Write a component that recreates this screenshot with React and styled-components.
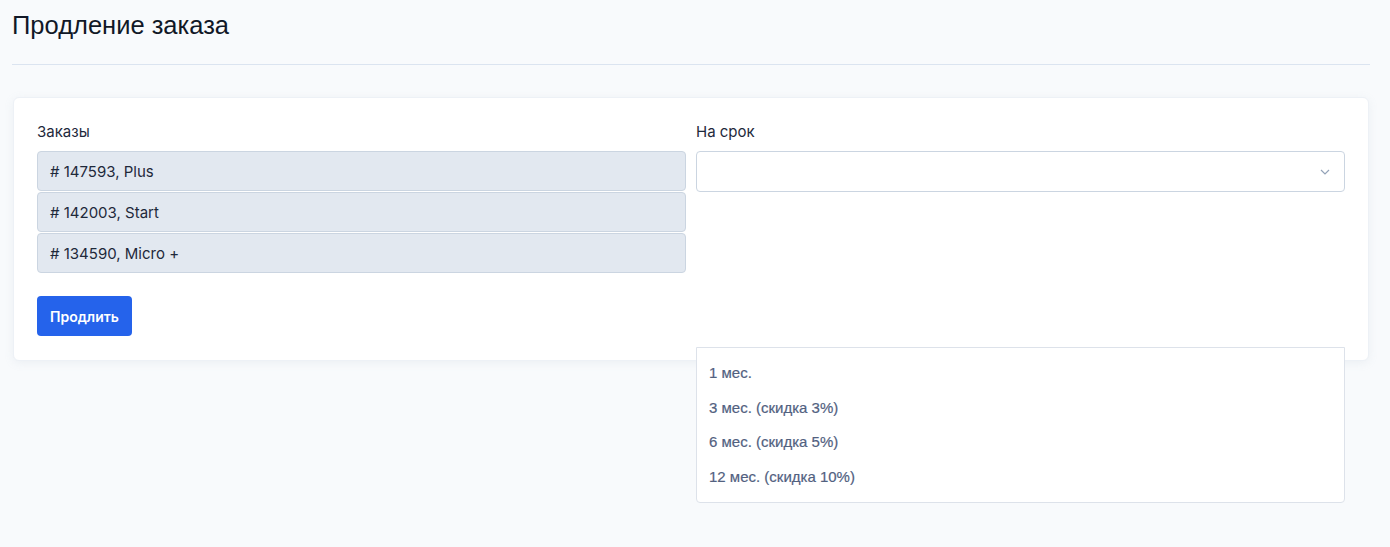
import React from 'react'
import styled, { createGlobalStyle } from 'styled-components'

const GlobalStyle = createGlobalStyle`
  body {
    margin: 0;
    background: #f8fafc;
    font-family: Inter, "Noto Sans", sans-serif;
    color: #1e293b;
  }
`

const Page = styled.div`
  padding: 12px 20px 0 12px;
  min-height: 547px;
  box-sizing: border-box;
`

const Title = styled.h1`
  margin: 0;
  height: 52px;
  font-family: "Liberation Sans", Arial, sans-serif;
  font-size: 25.5px;
  font-weight: 400;
  line-height: 27px;
  color: #111827;
`

const Divider = styled.hr`
  margin: 0 0 32px;
  border: 0;
  border-top: 1px solid #dbe4f0;
`

const Card = styled.div`
  margin: 0 1px;
  padding: 24px 23px;
  background: #fff;
  border: 1px solid #edf1f6;
  border-radius: 6px;
  box-shadow: 0 2px 10px rgba(148, 163, 184, 0.12);
`

const Columns = styled.div`
  display: grid;
  grid-template-columns: 1fr 1fr;
  column-gap: 10px;
`

const Column = styled.div`
  position: relative;
  display: flex;
  flex-direction: column;
`

const Label = styled.div`
  font-size: 15px;
  line-height: 20px;
  margin-bottom: 9px;
  color: #1e293b;
`

const OrderItem = styled.div`
  height: 40px;
  box-sizing: border-box;
  display: flex;
  align-items: center;
  padding: 0 12px;
  margin-bottom: 1px;
  background: #e2e8f0;
  border: 1px solid #cbd5e1;
  border-radius: 4px;
  font-size: 15px;
  color: #1e293b;
`

const Select = styled.div`
  height: 41px;
  box-sizing: border-box;
  display: flex;
  align-items: center;
  justify-content: flex-end;
  padding: 0 14px;
  border: 1px solid #cbd5e1;
  border-radius: 4px;
  background: #fff;
  color: #94a3b8;
`

const Dropdown = styled.ul`
  position: absolute;
  top: 225px;
  left: 0;
  right: 0;
  margin: 0;
  padding: 8px 0 8px;
  list-style: none;
  background: #fff;
  border: 1px solid #dde2ea;
  border-radius: 0 0 4px 4px;
  z-index: 2;
`

const Option = styled.li`
  padding: 0 12px;
  height: 34.5px;
  line-height: 34.5px;
  font-family: "Liberation Sans", Arial, sans-serif;
  font-size: 15px;
  color: #52617f;
  -webkit-text-stroke: 0.2px #52617f;
`

const Button = styled.button`
  margin-top: 22px;
  align-self: flex-start;
  height: 40px;
  padding: 0 13px;
  border: 0;
  border-radius: 4px;
  background: #2563eb;
  color: #fff;
  font-family: Inter, "Noto Sans", sans-serif;
  font-size: 14px;
  font-weight: 600;
`

const orders = ['# 147593, Plus', '# 142003, Start', '# 134590, Micro +']
const periods = ['1 мес.', '3 мес. (скидка 3%)', '6 мес. (скидка 5%)', '12 мес. (скидка 10%)']

const Chevron = () => (
  <svg width="10" height="6" viewBox="0 0 10 6" fill="none">
    <path d="M1 1l4 4 4-4" stroke="currentColor" strokeWidth="1.2" />
  </svg>
)

const App = () => (
  <Page>
    <GlobalStyle />
    <Title>Продление заказа</Title>
    <Divider />
    <Card>
      <Columns>
        <Column>
          <Label>Заказы</Label>
          {orders.map((o) => (
            <OrderItem key={o}>{o}</OrderItem>
          ))}
          <Button>Продлить</Button>
        </Column>
        <Column>
          <Label>На срок</Label>
          <Select>
            <Chevron />
          </Select>
          <Dropdown>
            {periods.map((p) => (
              <Option key={p}>{p}</Option>
            ))}
          </Dropdown>
        </Column>
      </Columns>
    </Card>
  </Page>
)

export default App
